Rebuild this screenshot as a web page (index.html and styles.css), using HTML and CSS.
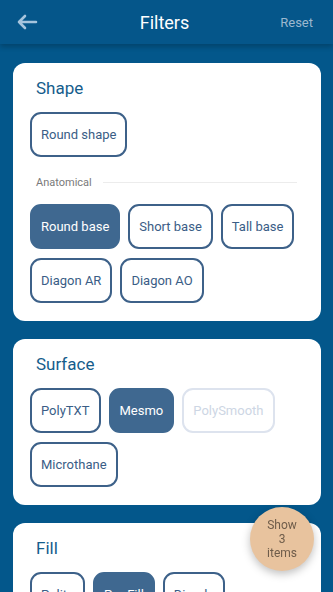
FILE: index.html
```html
<!DOCTYPE html>
<html lang="en">
<head>
    <meta charset="UTF-8">
    <meta name="viewport" content="width=device-width, initial-scale=1.0">
    <title>Filters</title>
    <link rel="stylesheet" href="styles.css">
</head>
<body>
    <!-- Top bar -->
    <header class="topbar">
        <button class="back-btn" aria-label="Back">
            <svg width="22" height="16" viewBox="0 0 22 16" fill="none">
                <path d="M20 8H3M9 2L3 8l6 6" stroke="currentColor" stroke-width="2.6" stroke-linecap="round" stroke-linejoin="round"/>
            </svg>
        </button>
        <h1 class="topbar-title">Filters</h1>
        <a href="#" class="reset-link">Reset</a>
    </header>

    <!-- Filter groups -->
    <main class="filters">
        <section class="card">
            <h2 class="card-title">Shape</h2>
            <div class="chips">
                <button class="chip">Round shape</button>
            </div>
            <div class="divider">
                <span>Anatomical</span>
            </div>
            <div class="chips">
                <button class="chip selected">Round base</button>
                <button class="chip">Short base</button>
                <button class="chip">Tall base</button>
                <button class="chip">Diagon AR</button>
                <button class="chip">Diagon AO</button>
            </div>
        </section>

        <section class="card">
            <h2 class="card-title">Surface</h2>
            <div class="chips">
                <button class="chip">PolyTXT</button>
                <button class="chip selected">Mesmo</button>
                <button class="chip" disabled>PolySmooth</button>
                <button class="chip">Microthane</button>
            </div>
        </section>

        <section class="card">
            <h2 class="card-title">Fill</h2>
            <div class="chips">
                <button class="chip">Polite</button>
                <button class="chip selected">Pro Fill</button>
                <button class="chip">Dimple</button>
            </div>
        </section>
    </main>

    <button class="show-btn">Show<br>3<br>items</button>
</body>
</html>
```

FILE: styles.css
```css
:root {
    --bg-blue: #03578b;
    --header-blue: #05568a;
    --title-blue: #155d8c;
    --chip-border: #3d6189;
    --chip-fill: #3f6890;
    --chip-text: #3a5d86;
    --disabled: #dde3ee;
    --disabled-text: #cdd6e4;
    --fab: #e8c39e;
}

body {
    margin: 0;
    font-family: Roboto, "Noto Sans", Arial, sans-serif;
    background-color: var(--bg-blue);
}

/* Top bar */
.topbar {
    height: 44px;
    background-color: var(--header-blue);
    box-shadow: 0 3px 5px rgba(0, 0, 0, 0.22);
    display: flex;
    align-items: center;
    justify-content: space-between;
    padding: 0 20px 0 16px;
    position: relative;
}

.back-btn {
    background: none;
    border: none;
    padding: 0;
    color: #a6c4dd;
    display: flex;
    width: 40px;
}

.topbar-title {
    margin: 0;
    font-size: 18px;
    font-weight: 400;
    color: #ffffff;
}

.reset-link {
    width: 40px;
    text-align: right;
    font-size: 13px;
    color: #9cb8cf;
    text-decoration: none;
}

/* Cards */
.filters {
    padding: 19px 12px 0 13px;
    display: flex;
    flex-direction: column;
    gap: 18px;
}

.card {
    background-color: #ffffff;
    border-radius: 12px;
    padding: 15px 17px 18px;
}

.card-title {
    margin: 0 7px 14px 6px;
    font-size: 17px;
    line-height: 20px;
    font-weight: 400;
    color: var(--title-blue);
}

.chips {
    display: flex;
    flex-wrap: wrap;
    gap: 9px 8px;
}

.chip {
    height: 45px;
    padding: 0 9px;
    border: 2px solid var(--chip-border);
    border-radius: 11px;
    background-color: #ffffff;
    color: var(--chip-text);
    font-family: inherit;
    font-size: 13px;
}

.chip.selected {
    background-color: var(--chip-fill);
    border-color: var(--chip-fill);
    color: #ffffff;
}

.chip:disabled {
    border-color: var(--disabled);
    color: var(--disabled-text);
}

.divider {
    display: flex;
    align-items: center;
    gap: 11px;
    height: 14px;
    margin: 18px 7px 15px 6px;
    font-size: 11px;
    color: #7a7a7a;
}

.divider::after {
    content: "";
    flex: 1;
    height: 1px;
    background-color: #ececec;
}

/* Floating button */
.show-btn {
    position: fixed;
    right: 19px;
    bottom: 21px;
    width: 64px;
    height: 64px;
    border: none;
    border-radius: 50%;
    background-color: var(--fab);
    box-shadow: 0 3px 8px rgba(0, 0, 0, 0.25);
    color: #6e5c4a;
    font-family: inherit;
    font-size: 12px;
    line-height: 14px;
}
```
